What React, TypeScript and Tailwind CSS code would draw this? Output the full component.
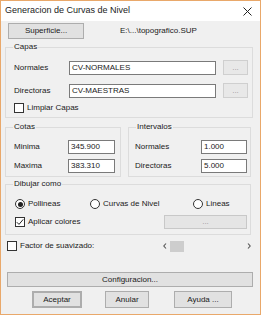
import React from "react";

const Btn = ({ className, children }: { className: string; children?: React.ReactNode }) => (
  <div className={"flex items-center justify-center bg-[#e1e1e1] border border-[#adadad] text-[8px] text-[#1a1a1a] " + className}>{children}</div>
);

const Input = ({ className, value }: { className: string; value: string }) => (
  <div className={"flex items-center bg-white border border-[#7a7a7a] pl-[2px] text-[8px] text-[#1a1a1a] leading-none " + className}>{value}</div>
);

const Check = ({ checked }: { checked?: boolean }) => (
  <div className="w-[10px] h-[10px] border border-[#333] bg-white flex items-center justify-center shrink-0">
    {checked && (
      <svg width="8" height="8" viewBox="0 0 8 8">
        <path d="M0.8 4.2 L3 6.4 L7.2 1.4" stroke="#222" strokeWidth="1" fill="none" />
      </svg>
    )}
  </div>
);

const Radio = ({ checked }: { checked?: boolean }) => (
  <div className="w-[10px] h-[10px] rounded-full border border-[#333] bg-white flex items-center justify-center shrink-0">
    {checked && <div className="w-[5px] h-[5px] rounded-full bg-[#222]" />}
  </div>
);

export default function App() {
  return (
    <div
      className="w-[261px] h-[315px] border border-[#e9a86a] flex flex-col bg-[#f0f0f0] text-[#1a1a1a]"
      style={{ fontFamily: '"Liberation Sans", Arial, sans-serif' }}
    >
      <div className="h-[20px] bg-white flex items-center justify-between pl-[4px] pr-[8px] shrink-0">
        <span className="text-[9px] text-[#222]">Generacion de Curvas de Nivel</span>
        <svg width="9" height="9" viewBox="0 0 9 9">
          <path d="M0.5 0.5 L8.5 8.5 M8.5 0.5 L0.5 8.5" stroke="#222" strokeWidth="1" />
        </svg>
      </div>
      <div className="flex-1 flex flex-col">
        <div className="flex items-center mt-[2px]">
          <Btn className="ml-[7px] w-[76px] h-[16px]">Superficie...</Btn>
          <span className="ml-[36px] text-[8px]">E:\...\topografico.SUP</span>
        </div>

        <fieldset className="ml-[4px] w-[248px] mt-[3px] border border-[#dcdcdc] pl-[8px] pb-[3px]">
          <legend className="ml-[-1px] px-[1px] text-[8px] leading-[10px]">Capas</legend>
          <div className="flex items-center mt-[8px]">
            <span className="w-[55px] text-[8px]">Normales</span>
            <Input className="w-[147px] h-[14px]" value="CV-NORMALES" />
            <Btn className="ml-[7px] w-[25px] h-[15px] bg-[#e8e8e8] border-[#cfcfcf] text-[#9a9a9a]">...</Btn>
          </div>
          <div className="flex items-center mt-[8px]">
            <span className="w-[55px] text-[8px]">Directoras</span>
            <Input className="w-[147px] h-[14px]" value="CV-MAESTRAS" />
            <Btn className="ml-[7px] w-[25px] h-[15px] bg-[#e8e8e8] border-[#cfcfcf] text-[#9a9a9a]">...</Btn>
          </div>
          <div className="flex items-center mt-[4px] gap-[3px]">
            <Check />
            <span className="text-[8px]">Limpiar Capas</span>
          </div>
        </fieldset>

        <div className="flex mt-[4px]">
          <fieldset className="ml-[4px] w-[116px] border border-[#dcdcdc] pl-[8px] pb-[3px]">
            <legend className="ml-[-1px] px-[1px] text-[8px] leading-[10px]">Cotas</legend>
            <div className="flex items-center mt-[8px]">
              <span className="w-[54px] text-[8px]">Minima</span>
              <Input className="w-[47px] h-[14px]" value="345.900" />
            </div>
            <div className="flex items-center mt-[5px]">
              <span className="w-[54px] text-[8px]">Maxima</span>
              <Input className="w-[47px] h-[14px]" value="383.310" />
            </div>
          </fieldset>
          <fieldset className="ml-[7px] w-[123px] border border-[#dcdcdc] pl-[6px] pb-[3px]">
            <legend className="ml-[1px] px-[1px] text-[8px] leading-[10px]">Intervalos</legend>
            <div className="flex items-center mt-[8px]">
              <span className="w-[66px] text-[8px]">Normales</span>
              <Input className="w-[46px] h-[14px]" value="1.000" />
            </div>
            <div className="flex items-center mt-[5px]">
              <span className="w-[66px] text-[8px]">Directoras</span>
              <Input className="w-[46px] h-[14px]" value="5.000" />
            </div>
          </fieldset>
        </div>

        <fieldset className="ml-[4px] w-[246px] mt-[2px] border border-[#dcdcdc] pl-[9px] pb-[5px]">
          <legend className="ml-[-2px] px-[1px] text-[8px] leading-[10px]">Dibujar como</legend>
          <div className="flex items-center mt-[9px] text-[8px]">
            <div className="flex items-center gap-[3px] w-[75px]">
              <Radio checked />
              <span>Pollineas</span>
            </div>
            <div className="flex items-center gap-[3px] w-[103px]">
              <Radio />
              <span>Curvas de Nivel</span>
            </div>
            <div className="flex items-center gap-[3px]">
              <Radio />
              <span>Lineas</span>
            </div>
          </div>
          <div className="flex items-center mt-[5px]">
            <div className="flex items-center gap-[3px] w-[149px]">
              <Check checked />
              <span className="text-[8px]">Aplicar colores</span>
            </div>
            <Btn className="w-[83px] h-[14px] bg-[#e5e5e5] border-[#c8c8c8] text-[#9a9a9a]">...</Btn>
          </div>
        </fieldset>

        <div className="flex items-center mt-[6px] h-[10px]">
          <div className="ml-[6px] flex items-center gap-[3px] w-[154px]">
            <Check />
            <span className="text-[8px]">Factor de suavizado:</span>
          </div>
          <svg width="6" height="8" viewBox="0 0 6 8" className="ml-[1px]">
            <path d="M4 1.5 L1.8 4 L4 6.5" stroke="#555" strokeWidth="1.1" fill="none" />
          </svg>
          <div className="ml-[2px] w-[14px] h-[11px] bg-[#cdcdcd]" />
          <div className="flex-1" />
          <svg width="6" height="8" viewBox="0 0 6 8" className="mr-[8px]">
            <path d="M2 1.5 L4.2 4 L2 6.5" stroke="#555" strokeWidth="1.1" fill="none" />
          </svg>
        </div>

        <Btn className="ml-[6px] w-[246px] h-[15px] mt-[21px]">Configuracion...</Btn>

        <div className="flex items-center mt-[4px]">
          <Btn className="ml-[31px] w-[50px] h-[17px] border-[#0078d7] border-[2px]">Aceptar</Btn>
          <Btn className="ml-[23px] w-[44px] h-[17px]">Anular</Btn>
          <Btn className="ml-[25px] w-[58px] h-[17px]">Ayuda ...</Btn>
        </div>
      </div>
    </div>
  );
}
